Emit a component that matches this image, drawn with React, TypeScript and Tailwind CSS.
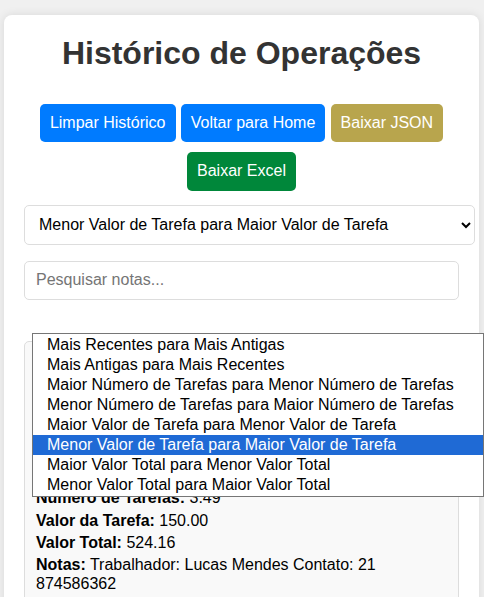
import { useState } from "react";

const sortOptions = [
  "Mais Recentes para Mais Antigas",
  "Mais Antigas para Mais Recentes",
  "Maior Número de Tarefas para Menor Número de Tarefas",
  "Menor Número de Tarefas para Maior Número de Tarefas",
  "Maior Valor de Tarefa para Menor Valor de Tarefa",
  "Menor Valor de Tarefa para Maior Valor de Tarefa",
  "Maior Valor Total para Menor Valor Total",
  "Menor Valor Total para Maior Valor Total",
];

const font = { fontFamily: '"Liberation Sans", Arial, sans-serif' };

export default function App() {
  const [sort, setSort] = useState(5);
  const [query, setQuery] = useState("");

  return (
    <div
      className="relative min-h-[597px] bg-[#f0f0f0] pt-[15px] pl-[4px] text-[16px] leading-[18.4px] text-[#333]"
      style={font}
    >
      <div className="w-[475px] rounded-[8px] bg-white px-[20px] pt-[20px] pb-[20px] shadow-[0_0_10px_rgba(0,0,0,0.1)]">
        <h1 className="text-center text-[32px] leading-[37px] font-bold text-[#333]">
          Histórico de Operações
        </h1>

        <div className="mt-[32px] flex flex-wrap justify-center gap-x-[5.3px] gap-y-[10px]">
          <button className="rounded-[5px] bg-[#007bff] px-[10px] py-[10px] leading-[18.4px] text-white">
            Limpar Histórico
          </button>
          <button className="rounded-[5px] bg-[#007bff] px-[10px] py-[10px] leading-[18.4px] text-white">
            Voltar para Home
          </button>
          <button className="rounded-[5px] bg-[#b8a54d] px-[10px] py-[10px] leading-[18.4px] text-white">
            Baixar JSON
          </button>
          <button className="rounded-[5px] bg-[#00873a] px-[10px] py-[10px] leading-[18.4px] text-white">
            Baixar Excel
          </button>
        </div>

        <select
          value={sort}
          onChange={(e) => setSort(Number(e.target.value))}
          className="mt-[14px] block h-[40px] w-[451px] rounded-[5px] border border-[#ddd] bg-white px-[10px] text-black"
        >
          {sortOptions.map((o, i) => (
            <option key={o} value={i}>
              {o}
            </option>
          ))}
        </select>

        <input
          value={query}
          onChange={(e) => setQuery(e.target.value)}
          placeholder="Pesquisar notas..."
          className="mt-[16px] block h-[39px] w-full rounded-[5px] border border-[#ddd] px-[11px] text-black placeholder:text-[#757575]"
        />

        <div className="mt-[41px] flex flex-col gap-[4px] rounded-[5px] border border-[#ddd] bg-[#f9f9f9] pt-[13px] pr-[11px] pb-[12px] pl-[11px] text-black">
          <p>
            <b>Data:</b> 12/03/2024 14:32
          </p>
          <p>
            <b>Operação:</b> Cálculo
          </p>
          <p>
            <b>Horas:</b> 8
          </p>
          <p>
            <b>Minutos:</b> 30
          </p>
          <p>
            <b>Tempo Total:</b> 8.50
          </p>
          <p>
            <b>Tarefas por Hora:</b> 0.41
          </p>
          <p>
            <b>Número de Tarefas:</b> 3.49
          </p>
          <p>
            <b>Valor da Tarefa:</b> 150.00
          </p>
          <p>
            <b>Valor Total:</b> 524.16
          </p>
          <p>
            <b>Notas:</b> Trabalhador: Lucas Mendes Contato: 21 874586362
          </p>
        </div>
      </div>

      {/* open native dropdown list */}
      <ul className="absolute top-[333px] left-[32px] w-[452px] border border-[#767676] bg-white py-[1px] text-black">
        {sortOptions.map((o, i) => (
          <li
            key={o}
            onClick={() => setSort(i)}
            className={
              i === sort
                ? "h-[20px] bg-[#1f6ad5] pl-[14px] leading-[20px] text-white"
                : "h-[20px] pl-[14px] leading-[20px]"
            }
          >
            {o}
          </li>
        ))}
      </ul>
    </div>
  );
}
